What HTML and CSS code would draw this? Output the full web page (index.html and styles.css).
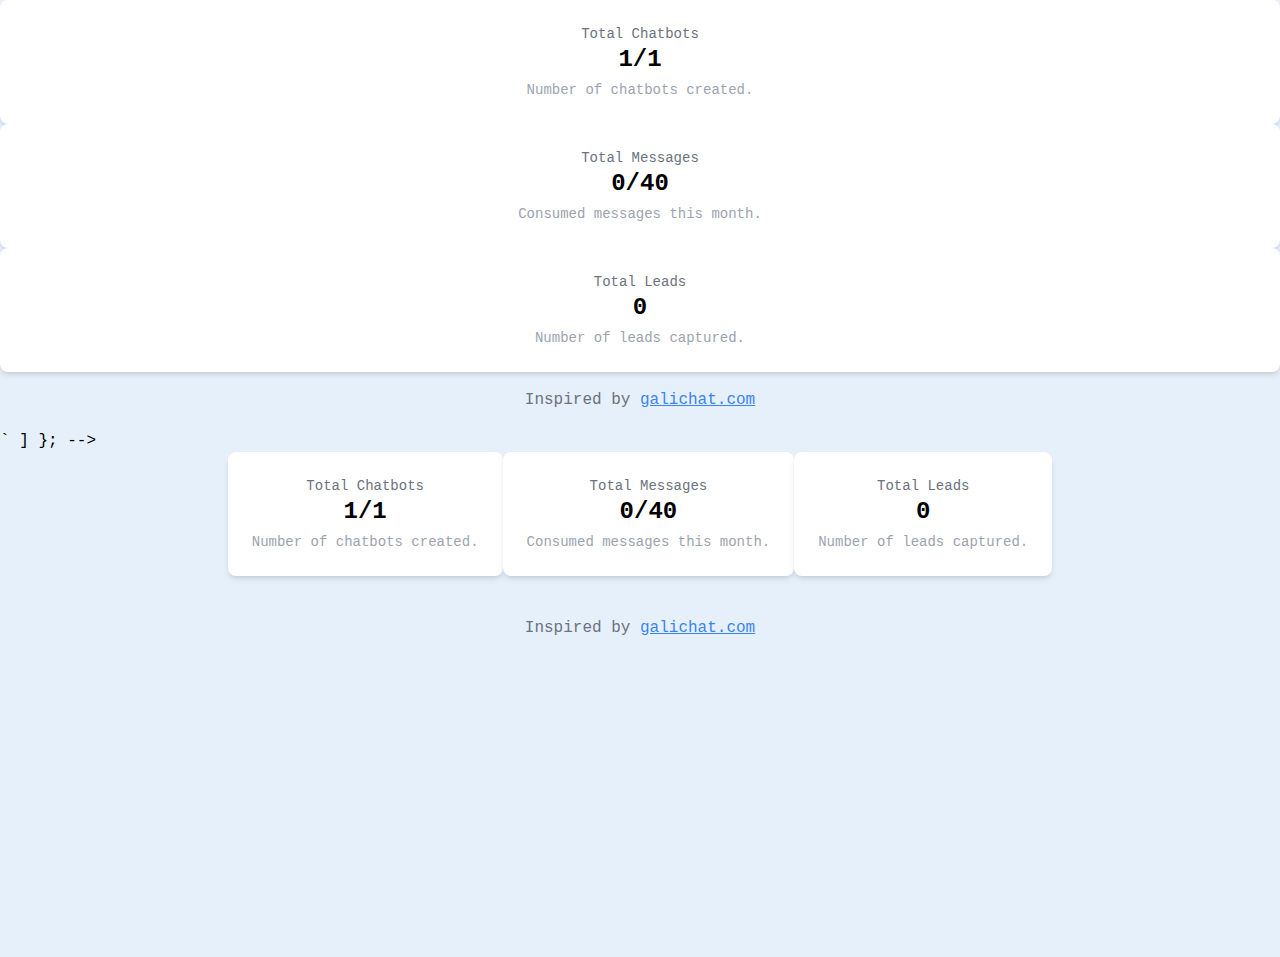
FILE: index.html
```html
<!DOCTYPE html>
<html>
<head>
<meta charset="utf-8">
<title>Chatbot Dashboard</title>
<link rel="stylesheet" href="styles.css">
</head>
<body>
<div class="stack">
  <div class="card">
    <div class="label">Total Chatbots</div>
    <div class="value">1/1</div>
    <div class="desc">Number of chatbots created.</div>
  </div>
  <div class="card">
    <div class="label">Total Messages</div>
    <div class="value">0/40</div>
    <div class="desc">Consumed messages this month.</div>
  </div>
  <div class="card">
    <div class="label">Total Leads</div>
    <div class="value">0</div>
    <div class="desc">Number of leads captured.</div>
  </div>
</div>
<p class="footer">Inspired by <a href="#">galichat.com</a></p>

<div class="stray">` ] }; --&gt;</div>

<div class="row">
  <div class="card">
    <div class="label">Total Chatbots</div>
    <div class="value">1/1</div>
    <div class="desc">Number of chatbots created.</div>
  </div>
  <div class="card">
    <div class="label">Total Messages</div>
    <div class="value">0/40</div>
    <div class="desc">Consumed messages this month.</div>
  </div>
  <div class="card">
    <div class="label">Total Leads</div>
    <div class="value">0</div>
    <div class="desc">Number of leads captured.</div>
  </div>
</div>
<p class="footer footer-low">Inspired by <a href="#">galichat.com</a></p>
</body>
</html>
```

FILE: styles.css
```css
body {
  margin: 0;
  font-family: "Liberation Mono", "Courier New", monospace;
  background-color: #e6f0fa;
  color: #000;
}

.card {
  background: #fff;
  border-radius: 8px;
  box-shadow: 0 4px 6px -1px rgba(0,0,0,.1), 0 2px 4px -2px rgba(0,0,0,.1);
  padding: 24px;
  text-align: center;
}

.label {
  font-size: 14px;
  line-height: 20px;
  color: #6b7280;
}

.value {
  font-size: 24px;
  line-height: 32px;
  font-weight: bold;
}

.desc {
  font-size: 14px;
  line-height: 20px;
  margin-top: 4px;
  color: #9ca3af;
}

.footer {
  margin: 16px 0 0;
  font-size: 16px;
  line-height: 24px;
  text-align: center;
  color: #6b7280;
}

.footer a {
  color: #3b82f6;
}

.stray {
  margin-top: 20px;
  font-size: 16px;
  line-height: 18px;
}

.row {
  display: flex;
  justify-content: center;
  margin-top: 2px;
}

.footer-low {
  margin-top: 40px;
}
```
